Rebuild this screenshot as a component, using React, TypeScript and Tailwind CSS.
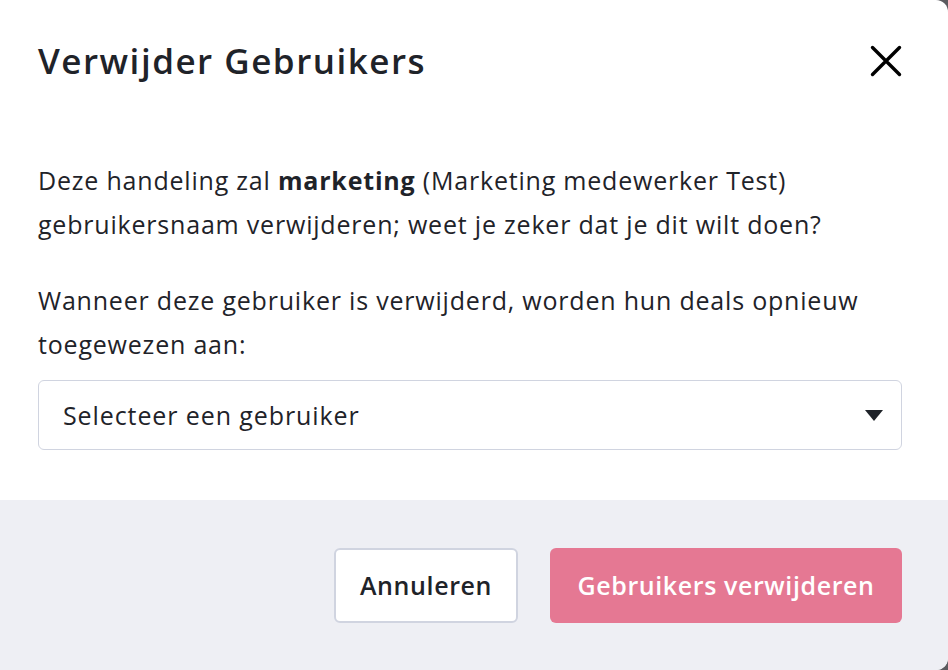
import React from 'react';

const App: React.FC = () => {
  return (
    <div className="h-[670px] w-[948px] bg-[#5b5b5f] font-['Open_Sans',sans-serif]">
      <div className="flex h-full flex-col overflow-hidden rounded-r-[12px] bg-white">
        <div className="flex items-center justify-between pl-[38px] pr-[46px] pt-[37px]">
          <h2 className="text-[35px] font-semibold leading-[48px] tracking-[1.5px] text-[#1f2329]">Verwijder Gebruikers</h2>
          <button className="text-black">
            <svg width="32" height="32" viewBox="0 0 32 32" fill="none" stroke="currentColor" strokeWidth="3.4" strokeLinecap="round">
              <path d="M2.5 2.5l27 27M29.5 2.5l-27 27" />
            </svg>
          </button>
        </div>

        <div className="flex-1 pl-[38px] pr-[46px] pt-[73px] text-[25px] leading-[44px] tracking-[0.8px] text-[#1f2329]">
          <p>
            Deze handeling zal <strong className="font-bold">marketing</strong> (Marketing medewerker Test)
            gebruikersnaam verwijderen; weet je zeker dat je dit wilt doen?
          </p>
          <p className="mt-[32px]">
            Wanneer deze gebruiker is verwijderd, worden hun deals opnieuw toegewezen aan:
          </p>
          <div className="mt-[14px] flex h-[70px] items-center justify-between rounded-[6px] border border-[#d0d4e0] pl-[24px] pr-[18px]">
            <span className="tracking-[0.9px]">Selecteer een gebruiker</span>
            <svg width="18" height="11" viewBox="0 0 18 11">
              <path d="M0 0h18L9 11z" fill="#1f2329" />
            </svg>
          </div>
        </div>

        <div className="flex h-[170px] items-start justify-end gap-[32px] bg-[#eeeff4] pr-[46px] pt-[48px]">
          <button className="h-[75px] w-[184px] rounded-[6px] border-2 border-[#d0d4e0] bg-white text-[25px] font-semibold tracking-[0.6px] text-[#1f2329]">
            Annuleren
          </button>
          <button className="h-[75px] w-[352px] rounded-[6px] bg-[#e57893] text-[25px] font-semibold tracking-[0.6px] text-white">
            Gebruikers verwijderen
          </button>
        </div>
      </div>
    </div>
  );
};

export default App;
